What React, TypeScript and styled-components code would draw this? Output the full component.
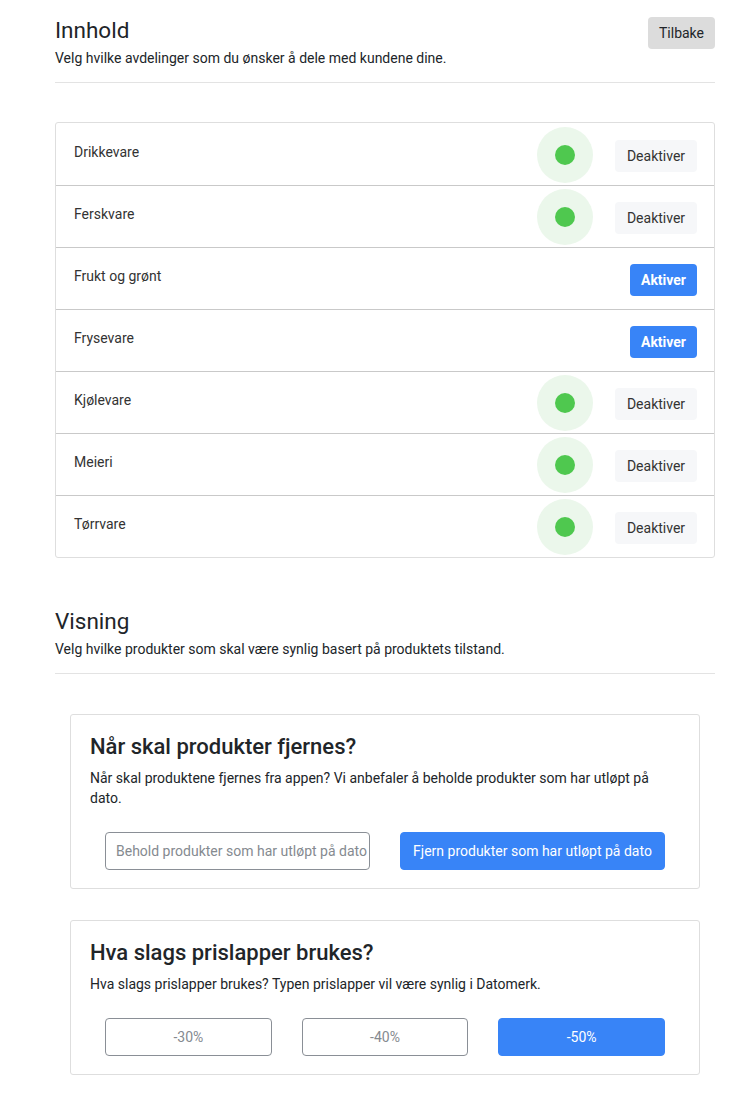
import React from "react";
import styled, { createGlobalStyle } from "styled-components";

const Global = createGlobalStyle`
  * { box-sizing: border-box; }
  html, body { margin: 0; padding: 0; background: #fff; }
  body {
    font-family: Roboto, "Noto Sans", "Liberation Sans", sans-serif;
    color: #212529;
    font-size: 14px;
  }
`;

const Page = styled.div`
  width: 660px;
  margin-left: 55px;
  padding-top: 17px;
  padding-bottom: 21px;
`;

const Header = styled.div`
  display: flex;
  justify-content: space-between;
  align-items: flex-start;
  padding-bottom: 13px;
  border-bottom: 1px solid #e3e3e3;
`;

const HeaderText = styled.div`
  display: flex;
  flex-direction: column;
`;

const Title = styled.h2`
  margin: 0;
  font-size: 22.5px;
  font-weight: 400;
  line-height: 27px;
  color: #212529;
`;

const Subtitle = styled.p`
  margin: 4px 0 0;
  font-size: 14px;
  line-height: 21px;
`;

const BackButton = styled.button`
  font-family: inherit;
  font-size: 14px;
  height: 32px;
  width: 67px;
  border: none;
  border-radius: 4px;
  background: #dcdcdc;
  color: #212529;
`;

const Section = styled.section<{ $top: number }>`
  margin-top: ${(p) => p.$top}px;
`;

const List = styled.div`
  margin-top: 39px;
  border: 1px solid #dedede;
  border-radius: 3px;
`;

const Row = styled.div`
  height: 62px;
  display: flex;
  align-items: center;
  padding: 0 17px 0 18px;
  & + & {
    border-top: 1px solid #c9c9c9;
  }
`;

const Label = styled.span`
  flex: 1;
  font-size: 14px;
  color: #333;
  margin-bottom: 5px;
`;

const Halo = styled.div`
  width: 56px;
  height: 56px;
  border-radius: 50%;
  background: #ebf7eb;
  display: flex;
  align-items: center;
  justify-content: center;
  margin-right: 22px;
  margin-top: 1px;
`;

const Dot = styled.div`
  width: 20px;
  height: 20px;
  border-radius: 50%;
  background: #4fc84f;
`;

const ToggleButton = styled.button<{ $active: boolean }>`
  font-family: inherit;
  font-size: 14px;
  border: none;
  border-radius: 4px;
  height: 32px;
  margin-top: 3px;
  padding: 0;
  width: ${(p) => (p.$active ? "82px" : "67px")};
  background: ${(p) => (p.$active ? "#f6f7f9" : "#3884f7")};
  color: ${(p) => (p.$active ? "#333" : "#fff")};
  font-weight: ${(p) => (p.$active ? 400 : 700)};
`;

const Cards = styled.div`
  padding: 0 15px;
  margin-top: 40px;
  display: flex;
  flex-direction: column;
  gap: 31px;
`;

const Card = styled.div`
  border: 1px solid #dedede;
  border-radius: 3px;
  padding: 18px 19px 18px;
`;

const CardTitle = styled.h3`
  margin: 0;
  font-size: 22px;
  font-weight: 500;
  line-height: 27px;
  color: #212529;
`;

const CardText = styled.p`
  margin: 8px 0 0;
  font-size: 14px;
  line-height: 20px;
`;

const Options = styled.div<{ $cols: number }>`
  display: grid;
  grid-template-columns: repeat(${(p) => p.$cols}, 1fr);
  gap: 30px;
  padding: 0 15px;
  margin-top: 24px;
`;

const Option = styled.button<{ $selected: boolean; $left?: boolean }>`
  font-family: inherit;
  font-size: 14px;
  height: 38px;
  border-radius: 4px;
  white-space: nowrap;
  overflow: hidden;
  padding: 0 10px;
  text-align: ${(p) => (p.$left ? "left" : "center")};
  border: ${(p) => (p.$selected ? "1px solid #3884f7" : "1px solid #8a8f96")};
  background: ${(p) => (p.$selected ? "#3884f7" : "#fff")};
  color: ${(p) => (p.$selected ? "#fff" : "#858a90")};
`;

const departments = [
  { name: "Drikkevare", active: true },
  { name: "Ferskvare", active: true },
  { name: "Frukt og grønt", active: false },
  { name: "Frysevare", active: false },
  { name: "Kjølevare", active: true },
  { name: "Meieri", active: true },
  { name: "Tørrvare", active: true },
];

export default function App() {
  return (
    <>
      <Global />
      <Page>
        <Header>
          <HeaderText>
            <Title>Innhold</Title>
            <Subtitle>Velg hvilke avdelinger som du ønsker å dele med kundene dine.</Subtitle>
          </HeaderText>
          <BackButton>Tilbake</BackButton>
        </Header>
        <List>
          {departments.map((d) => (
            <Row key={d.name}>
              <Label>{d.name}</Label>
              {d.active && (
                <Halo>
                  <Dot />
                </Halo>
              )}
              <ToggleButton $active={d.active}>{d.active ? "Deaktiver" : "Aktiver"}</ToggleButton>
            </Row>
          ))}
        </List>
        <Section $top={50}>
          <Header>
            <HeaderText>
              <Title>Visning</Title>
              <Subtitle>Velg hvilke produkter som skal være synlig basert på produktets tilstand.</Subtitle>
            </HeaderText>
          </Header>
        </Section>
        <Cards>
          <Card>
            <CardTitle>Når skal produkter fjernes?</CardTitle>
            <CardText>
              Når skal produktene fjernes fra appen? Vi anbefaler å beholde produkter som har utløpt på dato.
            </CardText>
            <Options $cols={2}>
              <Option $selected={false} $left>
                Behold produkter som har utløpt på dato
              </Option>
              <Option $selected={true}>Fjern produkter som har utløpt på dato</Option>
            </Options>
          </Card>
          <Card>
            <CardTitle>Hva slags prislapper brukes?</CardTitle>
            <CardText>Hva slags prislapper brukes? Typen prislapper vil være synlig i Datomerk.</CardText>
            <Options $cols={3}>
              <Option $selected={false}>-30%</Option>
              <Option $selected={false}>-40%</Option>
              <Option $selected={true}>-50%</Option>
            </Options>
          </Card>
        </Cards>
      </Page>
    </>
  );
}
